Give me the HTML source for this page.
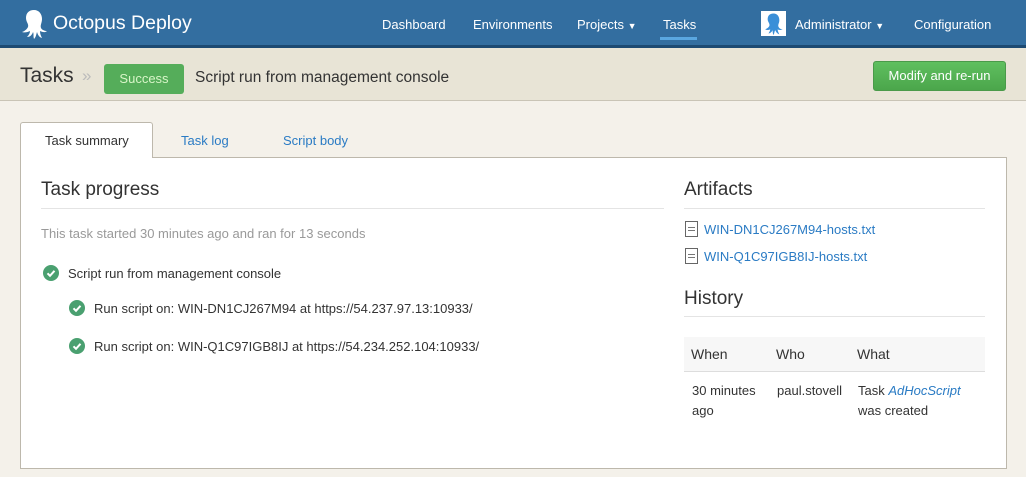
<!DOCTYPE html>
<html><head><style>
*{margin:0;padding:0;box-sizing:border-box}
body{width:1026px;height:477px;overflow:hidden;background:#f4f1ea;font-family:"Liberation Sans",sans-serif;color:#333;position:relative;font-size:13px}
.abs{position:absolute;white-space:nowrap}
.hdr{position:absolute;left:0;top:0;width:1026px;height:48px;background:#336ea0;border-bottom:3px solid #1d4a72}
.nav{color:#fff;font-size:13px;top:17px}
.sub{position:absolute;left:0;top:48px;width:1026px;height:53px;background:#e8e4d6;border-bottom:1px solid #c9c4b6}
.panel{position:absolute;left:20px;top:157px;width:987px;height:312px;background:#fff;border:1px solid #bdb8ac}
.tab{position:absolute;left:20px;top:122px;width:133px;height:36px;background:#fff;border:1px solid #bdb8ac;border-bottom:none;border-radius:3px 3px 0 0;z-index:2}
a,.lnk{color:#2a7bc4}
.chk{position:absolute;width:16px;height:16px;border-radius:50%;background:#4aa070}
.chk svg{position:absolute;left:0;top:0}
h2{font-weight:normal;font-size:19px;color:#333}
.line{position:absolute;height:1px;background:#e4e4e4}
.doc{position:absolute;width:13px;height:16px;border:1px solid #666;background:repeating-linear-gradient(#fff 0 2px,#777 2px 3px);background-clip:content-box;padding:3px 2px}
</style></head><body>
<div class="hdr"></div>
<svg class="abs" style="left:20px;top:9px" width="28" height="30" viewBox="0 0 28 30"><path d="M14 1c5 0 8 4 8 9 0 4-2 6-1 9 1 2 4 3 6 3-2 2-5 1-7 0 0 3 1 5 2 7-3-1-4-3-5-6-1 3-1 5-3 7-1-3 0-5-1-7-1 3-3 5-6 5 2-2 3-4 3-6-2 1-5 2-8 1 3-1 5-3 6-5 1-3-2-5-2-9 0-5 3-8 8-8z" fill="#fff"/></svg>
<div class="abs" style="left:53px;top:12px;font-size:19.5px;color:#fff">Octopus Deploy</div>
<div class="abs nav" style="left:382px">Dashboard</div>
<div class="abs nav" style="left:473px">Environments</div>
<div class="abs nav" style="left:577px">Projects <span style="font-size:9px">▼</span></div>
<div class="abs nav" style="left:663px">Tasks</div>
<div class="abs" style="left:660px;top:37px;width:37px;height:3px;background:#5aa7e0"></div>
<div class="abs" style="left:761px;top:11px;width:25px;height:25px;background:#fff"><svg width="25" height="25" viewBox="0 0 28 30"><path d="M14 3c5 0 7 4 7 8 0 4-2 5-1 8 1 2 3 3 5 3-2 1-4 1-6 0 0 2 1 4 2 6-3-1-4-3-5-5-1 2-1 4-2 6-1-2-1-4-1-6-1 2-3 4-5 4 1-2 2-3 2-5-2 1-4 1-6 0 2-1 4-2 5-4 1-3-2-5-2-8 0-4 2-7 7-7z" fill="#3a8fd8"/></svg></div>
<div class="abs nav" style="left:795px">Administrator <span style="font-size:9px">▼</span></div>
<div class="abs nav" style="left:914px">Configuration</div>
<div class="sub"></div>
<div class="abs" style="left:20px;top:64px;font-size:21px;color:#333">Tasks</div>
<div class="abs" style="left:82px;top:66px;font-size:17px;color:#bbb">»</div>
<div class="abs" style="left:104px;top:64px;width:80px;height:30px;background:#55ad5a;border-radius:3px;color:#d8f5c8;font-size:13px;text-align:center;line-height:30px">Success</div>
<div class="abs" style="left:195px;top:69px;font-size:15.5px;color:#333">Script run from management console</div>
<div class="abs" style="left:873px;top:61px;width:133px;height:30px;background:linear-gradient(#5fbf5f,#4ba64b);border:1px solid #4a9a4a;border-radius:3px;color:#fff;font-size:13px;text-align:center;line-height:28px">Modify and re-run</div>
<div class="panel"></div>
<div class="tab"></div>
<div class="abs" style="left:45px;top:133px;color:#333;z-index:3">Task summary</div>
<div class="abs lnk" style="left:181px;top:133px">Task log</div>
<div class="abs lnk" style="left:283px;top:133px">Script body</div>
<h2 class="abs" style="left:41px;top:179px">Task progress</h2>
<div class="line" style="left:41px;top:208px;width:623px"></div>
<div class="abs" style="left:41px;top:226px;color:#999">This task started 30 minutes ago and ran for 13 seconds</div>
<div class="chk" style="left:43px;top:265px"><svg width="16" height="16"><path d="M4.5 8.3l2.5 2.5 4.5-5" stroke="#fff" stroke-width="2" fill="none"/></svg></div>
<div class="abs" style="left:68px;top:266px">Script run from management console</div>
<div class="chk" style="left:69px;top:300px"><svg width="16" height="16"><path d="M4.5 8.3l2.5 2.5 4.5-5" stroke="#fff" stroke-width="2" fill="none"/></svg></div>
<div class="abs" style="left:94px;top:301px">Run script on: WIN-DN1CJ267M94 at https://54.237.97.13:10933/</div>
<div class="chk" style="left:69px;top:338px"><svg width="16" height="16"><path d="M4.5 8.3l2.5 2.5 4.5-5" stroke="#fff" stroke-width="2" fill="none"/></svg></div>
<div class="abs" style="left:94px;top:339px">Run script on: WIN-Q1C97IGB8IJ at https://54.234.252.104:10933/</div>
<h2 class="abs" style="left:684px;top:179px">Artifacts</h2>
<div class="line" style="left:684px;top:208px;width:301px"></div>
<div class="doc" style="left:685px;top:221px"></div>
<div class="abs lnk" style="left:704px;top:222px">WIN-DN1CJ267M94-hosts.txt</div>
<div class="doc" style="left:685px;top:248px"></div>
<div class="abs lnk" style="left:704px;top:249px">WIN-Q1C97IGB8IJ-hosts.txt</div>
<h2 class="abs" style="left:684px;top:288px">History</h2>
<div class="line" style="left:684px;top:316px;width:301px"></div>
<div class="abs" style="left:684px;top:337px;width:301px;height:35px;background:#f7f7f7;border-bottom:1px solid #ddd"></div>
<div class="abs" style="left:691px;top:346px;font-size:14px">When</div>
<div class="abs" style="left:776px;top:346px;font-size:14px">Who</div>
<div class="abs" style="left:857px;top:346px;font-size:14px">What</div>
<div class="abs" style="left:692px;top:381px;line-height:20px">30 minutes<br>ago</div>
<div class="abs" style="left:777px;top:383px">paul.stovell</div>
<div class="abs" style="left:858px;top:381px;line-height:20px">Task <i class="lnk">AdHocScript</i><br>was created</div>
</body></html>
